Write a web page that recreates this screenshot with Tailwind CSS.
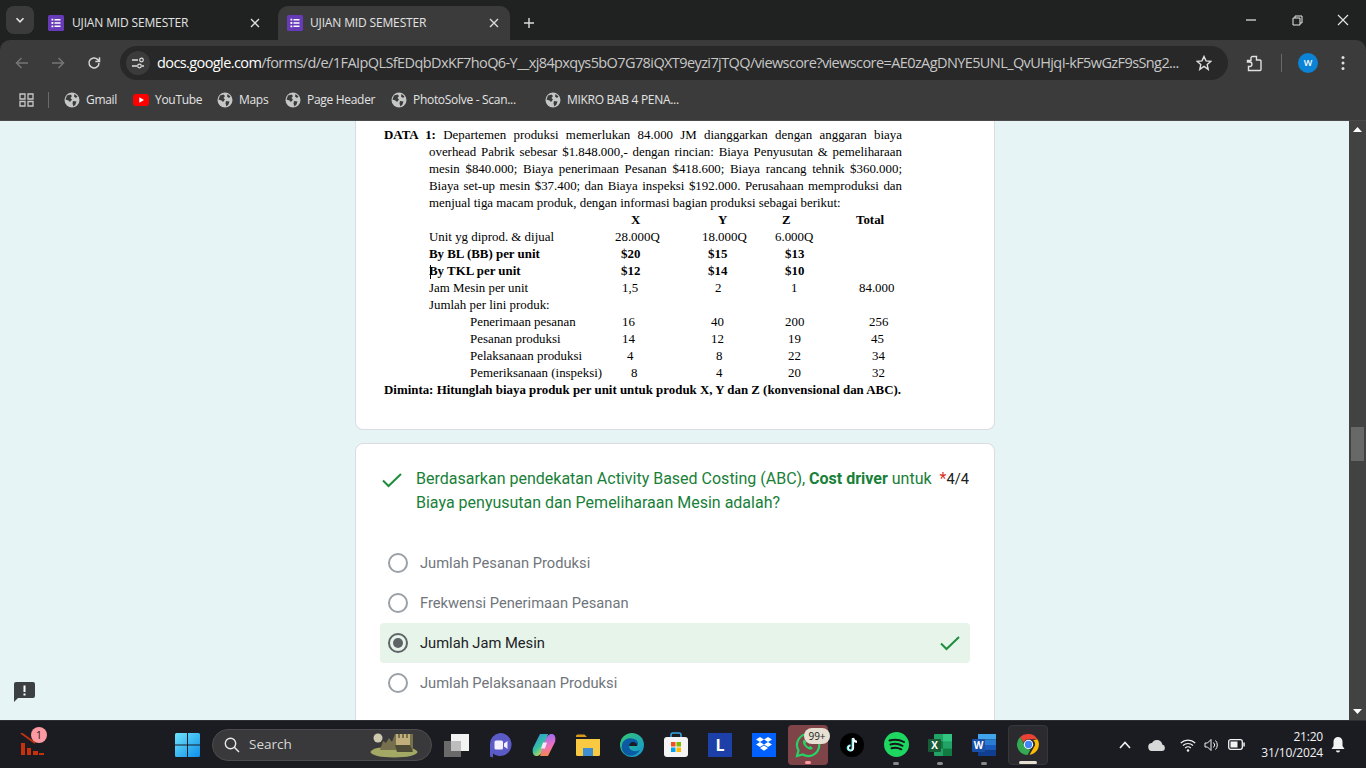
<!DOCTYPE html>
<html lang="en">
<head>
    <meta charset="UTF-8">
    <title>UJIAN MID SEMESTER</title>
    <script src="https://cdn.jsdelivr.net/npm/@tailwindcss/browser@4"></script>
</head>
<body class="w-[1366px] h-[768px] overflow-hidden flex flex-col bg-[#202222] font-['Open_Sans',sans-serif]">
    <svg class="hidden">
        <symbol id="globe" viewBox="0 0 16 16">
            <circle cx="8" cy="8" r="7.5" fill="#c4c7c5"/>
            <path d="M3 3.5 L6.5 2.5 L8 4 L6.5 6 L8 7.5 L6 10 L4.5 8.5 L1.5 7.5 Z M9 9 L12.5 9.5 L11.5 12.5 L9.5 14.5 L8.5 11.5 Z M10.5 2 L13.5 4.5 L12 6 L10 4.5 Z" fill="#3b3b3b"/>
        </symbol>
        <symbol id="forms" viewBox="0 0 16 16">
            <rect width="16" height="16" rx="1.5" fill="#673ab7"/>
            <path d="M3.5 3.8h1.8v1.8H3.5zM6.5 4h6v1.4h-6zM3.5 7.1h1.8v1.8H3.5zM6.5 7.3h6v1.4h-6zM3.5 10.4h1.8v1.8H3.5zM6.5 10.6h6V12h-6z" fill="#fff"/>
        </symbol>
        <symbol id="xmark" viewBox="0 0 10 10">
            <path d="M1 1L9 9M9 1L1 9" stroke="#dcdcdc" stroke-width="1.4" fill="none"/>
        </symbol>
        <symbol id="check" viewBox="0 0 20 20">
            <path d="M1 10.5L6.500 16L19 4" stroke="#1e8e3e" stroke-width="2" fill="none"/>
        </symbol>
    </svg>

    <!-- tab strip -->
    <div class="h-[40px] flex items-end text-[#e3e3e3] text-[12px]">
        <div class="w-[28px] h-[28px] ml-[6px] mb-[6px] rounded-[8px] bg-[#3b3b3b] flex items-center justify-center">
            <svg width="10" height="10" viewBox="0 0 10 10"><path d="M1.5 3.2L5 6.8L8.5 3.2" stroke="#e3e3e3" stroke-width="1.6" fill="none"/></svg>
        </div>
        <div class="w-[230px] ml-[14px] h-[34px] flex items-center">
            <svg class="w-[16px] h-[16px]"><use href="#forms"/></svg>
            <span class="ml-[8px] w-[178px] tracking-[-0.15px]">UJIAN MID SEMESTER</span>
            <svg class="w-[10px] h-[10px]"><use href="#xmark"/></svg>
        </div>
        <div class="w-[232px] h-[34px] bg-[#3b3b3b] rounded-t-[10px] flex items-center pl-[9px]">
            <svg class="w-[16px] h-[16px]"><use href="#forms"/></svg>
            <span class="ml-[7px] w-[179px] tracking-[-0.15px]">UJIAN MID SEMESTER</span>
            <svg class="w-[10px] h-[10px]"><use href="#xmark"/></svg>
        </div>
        <div class="w-[38px] h-[34px] flex items-center justify-center">
            <svg width="12" height="12" viewBox="0 0 12 12"><path d="M6 1v10M1 6h10" stroke="#dcdcdc" stroke-width="1.4"/></svg>
        </div>
        <div class="flex-1"></div>
        <div class="h-[40px] flex items-center">
            <div class="w-[46px] flex justify-center"><svg width="10" height="10" viewBox="0 0 10 10"><path d="M0 5h10" stroke="#e8e8e8" stroke-width="1.2"/></svg></div>
            <div class="w-[46px] flex justify-center"><svg width="11" height="11" viewBox="0 0 11 11"><path d="M1 3h7v7H1zM3 3V1h7v7H8" stroke="#e8e8e8" fill="none"/></svg></div>
            <div class="w-[46px] flex justify-center"><svg width="12" height="12" viewBox="0 0 12 12"><path d="M1 1l10 10M11 1L1 11" stroke="#e8e8e8" stroke-width="1.1"/></svg></div>
        </div>
    </div>

    <!-- toolbar -->
    <div class="h-[40px] bg-[#3b3b3b] rounded-t-[10px] flex items-start pt-[6px]">
        <div class="w-[120px] h-[34px] flex items-center">
            <svg class="ml-[14px]" width="16" height="16" viewBox="0 0 16 16"><path d="M14 8H3M7.5 3L2.5 8l5 5" stroke="#757575" stroke-width="1.5" fill="none"/></svg>
            <svg class="ml-[20px]" width="16" height="16" viewBox="0 0 16 16"><path d="M2 8h11M8.5 3l5 5-5 5" stroke="#757575" stroke-width="1.5" fill="none"/></svg>
            <svg class="ml-[20px]" width="16" height="16" viewBox="0 0 16 16"><path d="M13 8a5 5 0 1 1-1.5-3.6L13.5 6.3M13.5 2.2v4.2H9.3" stroke="#d5d5d5" stroke-width="1.5" fill="none"/></svg>
        </div>
        <div class="w-[1108px] h-[34px] rounded-full bg-[#282828] flex items-center">
            <div class="w-[24px] h-[24px] ml-[6px] rounded-full bg-[#3b3b3b] flex items-center justify-center">
                <svg width="14" height="14" viewBox="0 0 14 14"><path d="M1 4h6M11 10h2M1 10h5" stroke="#e0e0e0" stroke-width="1.3"/><circle cx="10.5" cy="4" r="1.8" stroke="#e0e0e0" stroke-width="1.2" fill="none"/><circle cx="8.5" cy="10" r="1.8" stroke="#e0e0e0" stroke-width="1.2" fill="none"/></svg>
            </div>
            <span class="ml-[7px] w-[1024px] whitespace-nowrap text-[14.5px] text-[#c7c7c7] tracking-[-0.595px]"><span class="text-white">docs.google.com</span>/forms/d/e/1FAIpQLSfEDqbDxKF7hoQ6-Y__xj84pxqys5bO7G78iQXT9eyzi7jTQQ/viewscore?viewscore=AE0zAgDNYE5UNL_QvUHjqI-kF5wGzF9sSng2...</span>
            <svg class="ml-[15px]" width="16" height="16" viewBox="0 0 16 16"><path d="M8 1.500l2 4.400 4.800.5-3.600 3.200 1 4.700L8 11.400l-4.200 2.900 1-4.700L1.200 6.400 6 5.900z" stroke="#e0e0e0" stroke-width="1.400" fill="none"/></svg>
        </div>
        <div class="flex-1 h-[34px] flex items-center">
            <svg class="ml-[18px]" width="17" height="17" viewBox="0 0 17 17"><path d="M1.500 5.500h3.500V3a1.500 1.500 0 0 1 1.500-1.500h4V5h3.500a1 1 0 0 1 1 1v8.500a1 1 0 0 1-1 1H2.500v-4h1.200a2 2 0 0 0 0-4.500H1.500z" stroke="#e0e0e0" stroke-width="1.400" fill="none"/></svg>
            <div class="ml-[18px] w-px h-[18px] bg-[#6a6a6a]"></div>
            <div class="ml-[16px] w-[20px] h-[20px] rounded-full bg-[#0b84d8] flex items-center justify-center text-white text-[9px] font-semibold">W</div>
            <svg class="ml-[23px]" width="4" height="16" viewBox="0 0 4 16"><circle cx="2" cy="2.500" r="1.500" fill="#e0e0e0"/><circle cx="2" cy="8" r="1.500" fill="#e0e0e0"/><circle cx="2" cy="13.500" r="1.500" fill="#e0e0e0"/></svg>
        </div>
    </div>

    <!-- bookmarks -->
    <div class="h-[41px] bg-[#3b3b3b] border-b border-[#4a4a4a] flex items-center text-[12px] text-[#e3e3e3] tracking-[-0.3px]">
        <svg class="ml-[19px]" width="15" height="14" viewBox="0 0 15 14"><path d="M1 1h5v5H1zM9 1h5v5H9zM1 8.500h5v4.500H1zM9 8.500h5v4.500H9z" stroke="#c7c7c7" stroke-width="1.300" fill="none"/></svg>
        <div class="ml-[14px] w-px h-[16px] bg-[#6a6a6a]"></div>
        <svg class="ml-[15px] w-[16px] h-[16px]"><use href="#globe"/></svg>
        <span class="ml-[6px] w-[39px]">Gmail</span>
        <svg class="ml-[8px]" width="16" height="12" viewBox="0 0 16 12"><rect width="16" height="12" rx="3" fill="#f00"/><path d="M6.300 3.200v5.600L11 6z" fill="#fff"/></svg>
        <span class="ml-[6px] w-[54px]">YouTube</span>
        <svg class="ml-[8px] w-[16px] h-[16px]"><use href="#globe"/></svg>
        <span class="ml-[6px] w-[38px]">Maps</span>
        <svg class="ml-[8px] w-[16px] h-[16px]"><use href="#globe"/></svg>
        <span class="ml-[6px] w-[76px]">Page Header</span>
        <svg class="ml-[8px] w-[16px] h-[16px]"><use href="#globe"/></svg>
        <span class="ml-[6px] w-[124px]">PhotoSolve - Scan...</span>
        <svg class="ml-[8px] w-[16px] h-[16px]"><use href="#globe"/></svg>
        <span class="ml-[6px]">MIKRO BAB 4 PENA...</span>
    </div>

    <!-- page -->
    <div class="h-[599px] flex overflow-hidden">
        <div class="relative w-[1349px] bg-[#e6f4f5]">
            <!-- question 1 card, top is scrolled away -->
            <div class="ml-[355px] w-[640px] h-[309px] bg-white border-x border-b border-[#dadce0] rounded-b-[8px] pl-[28px] pr-[92px] pt-[6px] font-['Liberation_Serif',serif] text-[12.9px] leading-[17px] text-black">
                <div class="[text-align:justify] [text-align-last:justify]"><b>DATA 1:</b> Departemen produksi memerlukan 84.000 JM dianggarkan dengan anggaran biaya</div>
                <div class="pl-[45px]">
                    <div class="[text-align:justify] [text-align-last:justify]">overhead Pabrik sebesar $1.848.000,- dengan rincian: Biaya Penyusutan &amp; pemeliharaan</div>
                    <div class="[text-align:justify] [text-align-last:justify]">mesin $840.000; Biaya penerimaan Pesanan $418.600; Biaya rancang tehnik $360.000;</div>
                    <div class="[text-align:justify] [text-align-last:justify]">Biaya set-up mesin $37.400; dan Biaya inspeksi $192.000. Perusahaan memproduksi dan</div>
                    <div>menjual tiga macam produk, dengan informasi bagian produksi sebagai berikut:</div>
                    <div class="grid grid-cols-[186px_87px_73px_81px_1fr] whitespace-nowrap">
                        <div></div><b class="pl-[16px]">X</b><b class="pl-[16px]">Y</b><b class="pl-[7px]">Z</b><b>Total</b>
                        <div>Unit yg diprod. &amp; dijual</div><div>28.000Q</div><div>18.000Q</div><div>6.000Q</div><div></div>
                        <b>By BL (BB) per unit</b><b class="pl-[6px]">$20</b><b class="pl-[6px]">$15</b><b class="pl-[10px]">$13</b><div></div>
                        <b class="relative">By TKL per unit<span class="absolute left-[1px] top-[2px] w-px h-[14px] bg-black"></span></b><b class="pl-[6px]">$12</b><b class="pl-[6px]">$14</b><b class="pl-[10px]">$10</b><div></div>
                        <div>Jam Mesin per unit</div><div class="pl-[7px]">1,5</div><div class="pl-[13px]">2</div><div class="pl-[16px]">1</div><div class="pl-[3px]">84.000</div>
                        <div>Jumlah per lini produk:</div><div></div><div></div><div></div><div></div>
                        <div class="pl-[41px]">Penerimaan pesanan</div><div class="pl-[7px]">16</div><div class="pl-[9px]">40</div><div class="pl-[10px]">200</div><div class="pl-[13px]">256</div>
                        <div class="pl-[41px]">Pesanan produksi</div><div class="pl-[7px]">14</div><div class="pl-[9px]">12</div><div class="pl-[13px]">19</div><div class="pl-[15px]">45</div>
                        <div class="pl-[41px]">Pelaksanaan produksi</div><div class="pl-[12px]">4</div><div class="pl-[14px]">8</div><div class="pl-[13px]">22</div><div class="pl-[16px]">34</div>
                        <div class="pl-[41px]">Pemeriksanaan (inspeksi)</div><div class="pl-[16px]">8</div><div class="pl-[14px]">4</div><div class="pl-[13px]">20</div><div class="pl-[16px]">32</div>
                    </div>
                </div>
                <b class="whitespace-nowrap">Diminta: Hitunglah biaya produk per unit untuk produk X, Y dan Z (konvensional dan ABC).</b>
            </div>

            <!-- question 2 card -->
            <div class="ml-[355px] mt-[13px] w-[640px] h-[400px] bg-white border border-[#dadce0] rounded-[8px] pt-[23px] font-['Roboto',sans-serif]">
                <div class="flex pl-[26px] pr-[25px]">
                    <svg class="w-[20px] h-[20px] mt-[3px] shrink-0"><use href="#check"/></svg>
                    <div class="ml-[14px] w-[520px] text-[16px] leading-[24px] text-[#188038]">Berdasarkan pendekatan Activity Based Costing (ABC), <b class="font-bold">Cost driver</b> untuk Biaya penyusutan dan Pemeliharaan Mesin adalah?</div>
                    <div class="ml-[7px] text-[14.7px] leading-[24px] text-[#202124] whitespace-nowrap"><span class="text-[#d93025] text-[16px]">*</span>4/4</div>
                </div>
                <div class="mt-[28px] ml-[24px] w-[590px] text-[14.7px]">
                    <div class="h-[40px] flex items-center pl-[8px] text-[#70757a]">
                        <div class="w-[20px] h-[20px] rounded-full border-2 border-[#9aa0a6]"></div>
                        <span class="ml-[12px]">Jumlah Pesanan Produksi</span>
                    </div>
                    <div class="h-[40px] flex items-center pl-[8px] text-[#70757a]">
                        <div class="w-[20px] h-[20px] rounded-full border-2 border-[#9aa0a6]"></div>
                        <span class="ml-[12px]">Frekwensi Penerimaan Pesanan</span>
                    </div>
                    <div class="h-[40px] flex items-center pl-[8px] pr-[10px] bg-[#e6f4ea] rounded-[4px] text-[#202124]">
                        <div class="w-[20px] h-[20px] rounded-full border-2 border-[#5f6368] flex items-center justify-center">
                            <div class="w-[10px] h-[10px] rounded-full bg-[#5f6368]"></div>
                        </div>
                        <span class="ml-[12px] flex-1">Jumlah Jam Mesin</span>
                        <svg class="w-[20px] h-[20px]"><use href="#check"/></svg>
                    </div>
                    <div class="h-[40px] flex items-center pl-[8px] text-[#70757a]">
                        <div class="w-[20px] h-[20px] rounded-full border-2 border-[#9aa0a6]"></div>
                        <span class="ml-[12px]">Jumlah Pelaksanaan Produksi</span>
                    </div>
                </div>
            </div>

            <!-- report problem button floats over page -->
            <svg class="absolute left-[14px] top-[561px]" width="21" height="20" viewBox="0 0 21 20"><path d="M2 0h17a2 2 0 0 1 2 2v12a2 2 0 0 1-2 2H4l-4 4V2a2 2 0 0 1 2-2z" fill="#3c4043"/><path d="M9.500 3.500h2v6.500h-2zM9.500 11.500h2v2h-2z" fill="#fff"/></svg>
        </div>
        <!-- scrollbar -->
        <div class="w-[17px] bg-[#424242] flex flex-col items-center py-[6px]">
            <svg width="9" height="5" viewBox="0 0 9 5"><path d="M4.500 0L9 5H0z" fill="#fff"/></svg>
            <div class="w-[13px] h-[34px] bg-[#686868] mt-[295px]"></div>
            <svg class="mt-auto" width="9" height="5" viewBox="0 0 9 5"><path d="M4.500 5L0 0h9z" fill="#fff"/></svg>
        </div>
    </div>

    <!-- taskbar -->
    <div class="h-[48px] bg-[#1b1b22] border-t border-[#2e2e33] flex items-center text-white">
        <div class="relative w-[175px] h-full">
            <svg class="absolute left-[20px] top-[12px]" width="24" height="23" viewBox="0 0 24 23"><path d="M1 0l14 10" stroke="#c8310e" stroke-width="1.800"/><path d="M1 10h4v12H1zM7 15h4v7H7zM13 18h5v4h-5zM19 20h5v2h-5z" fill="#c8310e"/></svg>
            <div class="absolute left-[31px] top-[6px] w-[16px] h-[16px] rounded-full bg-[#ff9aa2] text-[#222] text-[11px] leading-[16px] text-center">1</div>
        </div>
        <svg width="25" height="24" viewBox="0 0 25 24"><defs><linearGradient id="win" x1="0" y1="0" x2="1" y2="1"><stop offset="0" stop-color="#6fe3fb"/><stop offset="1" stop-color="#0c8fe8"/></linearGradient></defs><path d="M0 1.500A1.500 1.500 0 0 1 1.500 0H12v11.500H0zM13 0h10.500A1.500 1.500 0 0 1 25 1.500v10H13zM0 12.500h12V24H1.500A1.500 1.500 0 0 1 0 22.500zM13 12.500h12v10a1.500 1.500 0 0 1-1.500 1.500H13z" fill="url(#win)"/></svg>
        <div class="ml-[12px] w-[220px] h-[32px] rounded-full bg-[#39393b] border border-[#4c4c4e] flex items-center text-[13.5px] text-[#d8d8d8]">
            <svg class="ml-[11px]" width="16" height="16" viewBox="0 0 16 16"><circle cx="6.500" cy="6.500" r="5.200" stroke="#e8e8e8" stroke-width="1.400" fill="none"/><path d="M10.300 10.300L15 15" stroke="#e8e8e8" stroke-width="1.500"/></svg>
            <span class="ml-[9px] w-[121px]">Search</span>
            <svg width="48" height="26" viewBox="0 0 48 26"><ellipse cx="24" cy="20" rx="23.500" ry="5.500" fill="#a3a865"/><circle cx="8" cy="6" r="4.500" fill="#cfc9ae"/><path d="M10 18l3-9 3 2 3-5 3 4 3-8h18v16z" fill="#77704c"/><path d="M26 2h2v4h2V2h2v4h2V2h2v4h2V2h2v11H26z" fill="#c0ae7c"/><path d="M25 13h15l3 7H27z" fill="#4d4a36"/></svg>
        </div>
        <div class="ml-[2px] flex items-center">
            <div class="w-[44px] h-[40px] flex items-center justify-center"><svg width="25" height="24" viewBox="0 0 25 24"><rect x="7" y="1" width="18" height="17" fill="#f2f2f2"/><rect x="0" y="8" width="17" height="16" fill="#6a6a6a"/><rect x="7" y="8" width="10" height="10" fill="#bdbdbd"/></svg></div>
            <div class="w-[44px] h-[40px] flex items-center justify-center"><svg width="24" height="26" viewBox="0 0 24 26"><path d="M12 1a11.500 11.500 0 1 1-7 20.600V25.500l-3-1V12.500A11 11 0 0 1 12 1z" fill="#5b5bc8"/><rect x="6.500" y="8.500" width="8.500" height="9" rx="1.500" fill="#f3f0ff"/><path d="M16 11.500l3.500-2.500v8L16 14.500z" fill="#f3f0ff"/></svg></div>
            <div class="w-[44px] h-[40px] flex items-center justify-center"><svg width="24" height="24" viewBox="0 0 24 24"><defs><linearGradient id="cp1" x1="0" y1="0" x2="0.600" y2="1"><stop offset="0" stop-color="#2a8fe8"/><stop offset=".6" stop-color="#35c1a1"/><stop offset="1" stop-color="#e6d84a"/></linearGradient><linearGradient id="cp2" x1="0.400" y1="0" x2="0.600" y2="1"><stop offset="0" stop-color="#8f6ff5"/><stop offset=".55" stop-color="#ef6fc0"/><stop offset="1" stop-color="#f58a3e"/></linearGradient></defs><path d="M8 1h8L11 16c-1 3-3 7-6 7H4C1 23 0 19 1 15z" fill="url(#cp1)"/><path d="M16 23H8l5-15c1-3 3-7 6-7h1c3 0 4 4 3 8z" fill="url(#cp2)"/><path d="M11 9.500h4l-2 6h-4z" fill="#f6e6f6"/></svg></div>
            <div class="w-[44px] h-[40px] flex items-center justify-center"><svg width="24" height="22" viewBox="0 0 24 22"><path d="M0 2a1.500 1.500 0 0 1 1.500-1.500h7L11 3h-11z" fill="#d99a1c"/><path d="M0 5h24v15.500a1.500 1.500 0 0 1-1.500 1.500h-21A1.500 1.500 0 0 1 0 20.500z" fill="#f9c942"/><rect x="7" y="14" width="10" height="8" fill="#3d8fd1"/></svg></div>
            <div class="w-[44px] h-[40px] flex items-center justify-center"><svg width="24" height="24" viewBox="0 0 24 24"><defs><linearGradient id="ed" x1="0" y1="0" x2="1" y2="1"><stop offset="0" stop-color="#35c96f"/><stop offset="1" stop-color="#1292d8"/></linearGradient></defs><circle cx="12" cy="12" r="12" fill="url(#ed)"/><path d="M2 12C3 6 9 4 14 6c4 1 5 5 3 7h-8c0 4 5 7 11 4-3 5-9 7-13 5C3 20 1 16 2 12z" fill="#0c59a4"/><path d="M9 13h8c0-3-2-4-4-4s-4 2-4 4z" fill="#1b1b22"/></svg></div>
            <div class="w-[44px] h-[40px] flex items-center justify-center"><svg width="24" height="25" viewBox="0 0 24 25"><path d="M7 6V3a2 2 0 0 1 2-2h6a2 2 0 0 1 2 2v3" stroke="#35a5e8" stroke-width="1.500" fill="none"/><rect y="5" width="24" height="20" rx="3" fill="#f4f4f4"/><rect x="7" y="10" width="4.500" height="4.500" fill="#f25022"/><rect x="12.500" y="10" width="4.500" height="4.500" fill="#7fba00"/><rect x="7" y="15.500" width="4.500" height="4.500" fill="#00a4ef"/><rect x="12.500" y="15.500" width="4.500" height="4.500" fill="#ffb900"/></svg></div>
            <div class="w-[44px] h-[40px] flex items-center justify-center"><div class="w-[24px] h-[24px] bg-[#1d3fa8] text-white font-bold text-[16px] leading-[24px] text-center">L</div></div>
            <div class="w-[44px] h-[40px] flex items-center justify-center"><div class="w-[24px] h-[24px] bg-[#0061fe] flex items-center justify-center"><svg width="16" height="15" viewBox="0 0 16 15"><path d="M4 0l4 2.500L4 5 0 2.500zM12 0l4 2.500L12 5 8 2.500zM4 5l4 2.500L4 10 0 7.500zM12 5l4 2.500L12 10 8 7.500zM4 11l4-2.500 4 2.500-4 2.800z" fill="#fff"/></svg></div></div>
            <div class="relative w-[40px] h-[40px] mx-[2px] bg-[#7f4448] rounded-[4px] flex items-center justify-center">
                <svg width="26" height="26" viewBox="0 0 26 26"><path d="M13 2a11 11 0 0 0-9.500 16.500L2 24l5.700-1.500A11 11 0 1 0 13 2z" stroke="#25d366" stroke-width="2.200" fill="none"/><path d="M9 7.500c-2 2-1 5 1.500 7.500s5.500 3.500 7.500 1.500l-2.500-2.500-1.500 1c-1.500-.5-3-2-3.500-3.500l1-1.500z" fill="#25d366"/></svg>
                <div class="absolute left-[16px] top-[3px] w-[26px] h-[16px] rounded-[8px] bg-[#e7dfd2] text-[#222] text-[10px] leading-[16px] text-center">99+</div>
                <div class="absolute left-[17px] top-[36px] w-[6px] h-[3px] rounded-full bg-[#ff9aa2]"></div>
            </div>
            <div class="w-[44px] h-[40px] flex items-center justify-center"><svg width="24" height="24" viewBox="0 0 24 24"><circle cx="12" cy="12" r="12" fill="#000"/><path d="M13 5v10a2.500 2.500 0 1 1-2.500-2.500M13 5c.3 2.200 1.800 3.600 4 3.800" stroke="#fff" stroke-width="2.200" fill="none"/><path d="M12 5.500v9.500a2.500 2.500 0 1 1-2.500-2.500" stroke="#25f4ee" stroke-width=".8" fill="none"/></svg></div>
            <div class="relative w-[44px] h-[40px] flex items-center justify-center"><svg width="25" height="25" viewBox="0 0 25 25"><circle cx="12.500" cy="12.500" r="12.500" fill="#1ed760"/><path d="M5.500 8.500c5-1.500 10-1 14.500 1.500M6.500 12.500c4-1.200 8-.8 12 1.300M7.500 16.300c3.500-1 6.500-.6 9.800 1" stroke="#15161a" stroke-width="2" stroke-linecap="round" fill="none"/></svg><div class="absolute left-[19px] top-[37px] w-[6px] h-[3px] rounded-full bg-[#8a8a8a]"></div></div>
            <div class="relative w-[44px] h-[40px] flex items-center justify-center"><svg width="24" height="24" viewBox="0 0 24 24"><rect x="6" y="1" width="18" height="22" rx="1" fill="#21a366"/><rect x="15" y="1" width="9" height="7.300" fill="#33c481"/><rect x="15" y="15.600" width="9" height="7.400" fill="#107c41"/><rect x="6" y="8.300" width="9" height="7.300" fill="#107c41"/><rect y="6" width="13" height="13" rx="1" fill="#185c37"/><text x="6.500" y="16" font-size="10" font-weight="700" font-family="Open Sans" text-anchor="middle" fill="#fff">X</text></svg><div class="absolute left-[19px] top-[37px] w-[6px] h-[3px] rounded-full bg-[#8a8a8a]"></div></div>
            <div class="relative w-[44px] h-[40px] flex items-center justify-center"><svg width="24" height="24" viewBox="0 0 24 24"><rect x="6" y="1" width="18" height="5.500" fill="#41a5ee"/><rect x="6" y="6.500" width="18" height="5.500" fill="#2b7cd3"/><rect x="6" y="12" width="18" height="5.500" fill="#185abd"/><rect x="6" y="17.500" width="18" height="5.500" fill="#103f91"/><rect y="6" width="13" height="13" rx="1" fill="#1a4fa8"/><text x="6.500" y="16" font-size="10" font-weight="700" font-family="Open Sans" text-anchor="middle" fill="#fff">W</text></svg><div class="absolute left-[19px] top-[37px] w-[6px] h-[3px] rounded-full bg-[#8a8a8a]"></div></div>
            <div class="relative w-[40px] h-[40px] mx-[2px] bg-[#2a2a2f] border border-[#36363b] rounded-[4px] flex items-center justify-center">
                <svg width="25" height="25" viewBox="0 0 48 48"><path d="M24 4a20 20 0 0 1 17.300 10H24a10 10 0 0 0-9.400 6.500L7.900 9.800A20 20 0 0 1 24 4z" fill="#ea4335"/><path d="M41.300 14A20 20 0 0 1 26 43.900L34.700 29A10 10 0 0 0 33 16z" fill="#fbbc05"/><path d="M7.900 9.800L16.500 25A10 10 0 0 0 28 33.500L22 44A20 20 0 0 1 7.900 9.800z" fill="#34a853"/><circle cx="24" cy="24" r="9" fill="#fff"/><circle cx="24" cy="24" r="7" fill="#4285f4"/></svg>
                <div class="absolute left-[10px] top-[35px] w-[18px] h-[3px] rounded-full bg-[#e7dfd2]"></div>
            </div>
        </div>
        <!-- tray -->
        <div class="ml-[69px] flex items-center">
            <svg width="12" height="8" viewBox="0 0 12 8"><path d="M1 7l5-5.500L11 7" stroke="#f2f2f2" stroke-width="1.600" fill="none"/></svg>
            <svg class="ml-[17px]" width="18" height="13" viewBox="0 0 18 13"><path d="M4.500 13a4 4 0 0 1-.5-8 5.500 5.500 0 0 1 10.300 1.500A3.300 3.300 0 0 1 14 13z" fill="#d8d8d8"/></svg>
            <svg class="ml-[14px]" width="16" height="14" viewBox="0 0 16 14"><path d="M.8 5a10.500 10.500 0 0 1 14.400 0M3 7.500a7.300 7.300 0 0 1 10 0M5.200 10a4 4 0 0 1 5.600 0" stroke="#f2f2f2" stroke-width="1.200" fill="none"/><circle cx="8" cy="12.500" r="1.200" fill="#f2f2f2"/></svg>
            <svg class="ml-[8px]" width="16" height="14" viewBox="0 0 16 14"><path d="M1 5h2.500L7 1.500v11L3.500 9H1z" stroke="#f2f2f2" fill="none"/><path d="M9.500 4.500a3.500 3.500 0 0 1 0 5M11.500 2.500a6.500 6.500 0 0 1 0 9" stroke="#f2f2f2" fill="none"/></svg>
            <svg class="ml-[8px]" width="17" height="11" viewBox="0 0 17 11"><rect x=".7" y=".7" width="13.600" height="9.600" rx="2" stroke="#f2f2f2" stroke-width="1.300" fill="none"/><rect x="2.500" y="2.500" width="7" height="6" fill="#f2f2f2"/><rect x="15.300" y="3.500" width="1.500" height="4" fill="#f2f2f2"/></svg>
            <div class="ml-[8px] w-[70px] text-right text-[12px] leading-[16px] text-[#f2f2f2] tracking-[-0.2px]">
                <div>21:20</div>
                <div>31/10/2024</div>
            </div>
            <svg class="ml-[8px]" width="14" height="16" viewBox="0 0 14 16"><path d="M7 0a4.500 4.500 0 0 1 4.500 4.500V9l2 3H.5l2-3V4.500A4.500 4.500 0 0 1 7 0zM5 13.500h4a2 2 0 0 1-4 0z" fill="#f2f2f2"/></svg>
        </div>
    </div>
</body>
</html>
